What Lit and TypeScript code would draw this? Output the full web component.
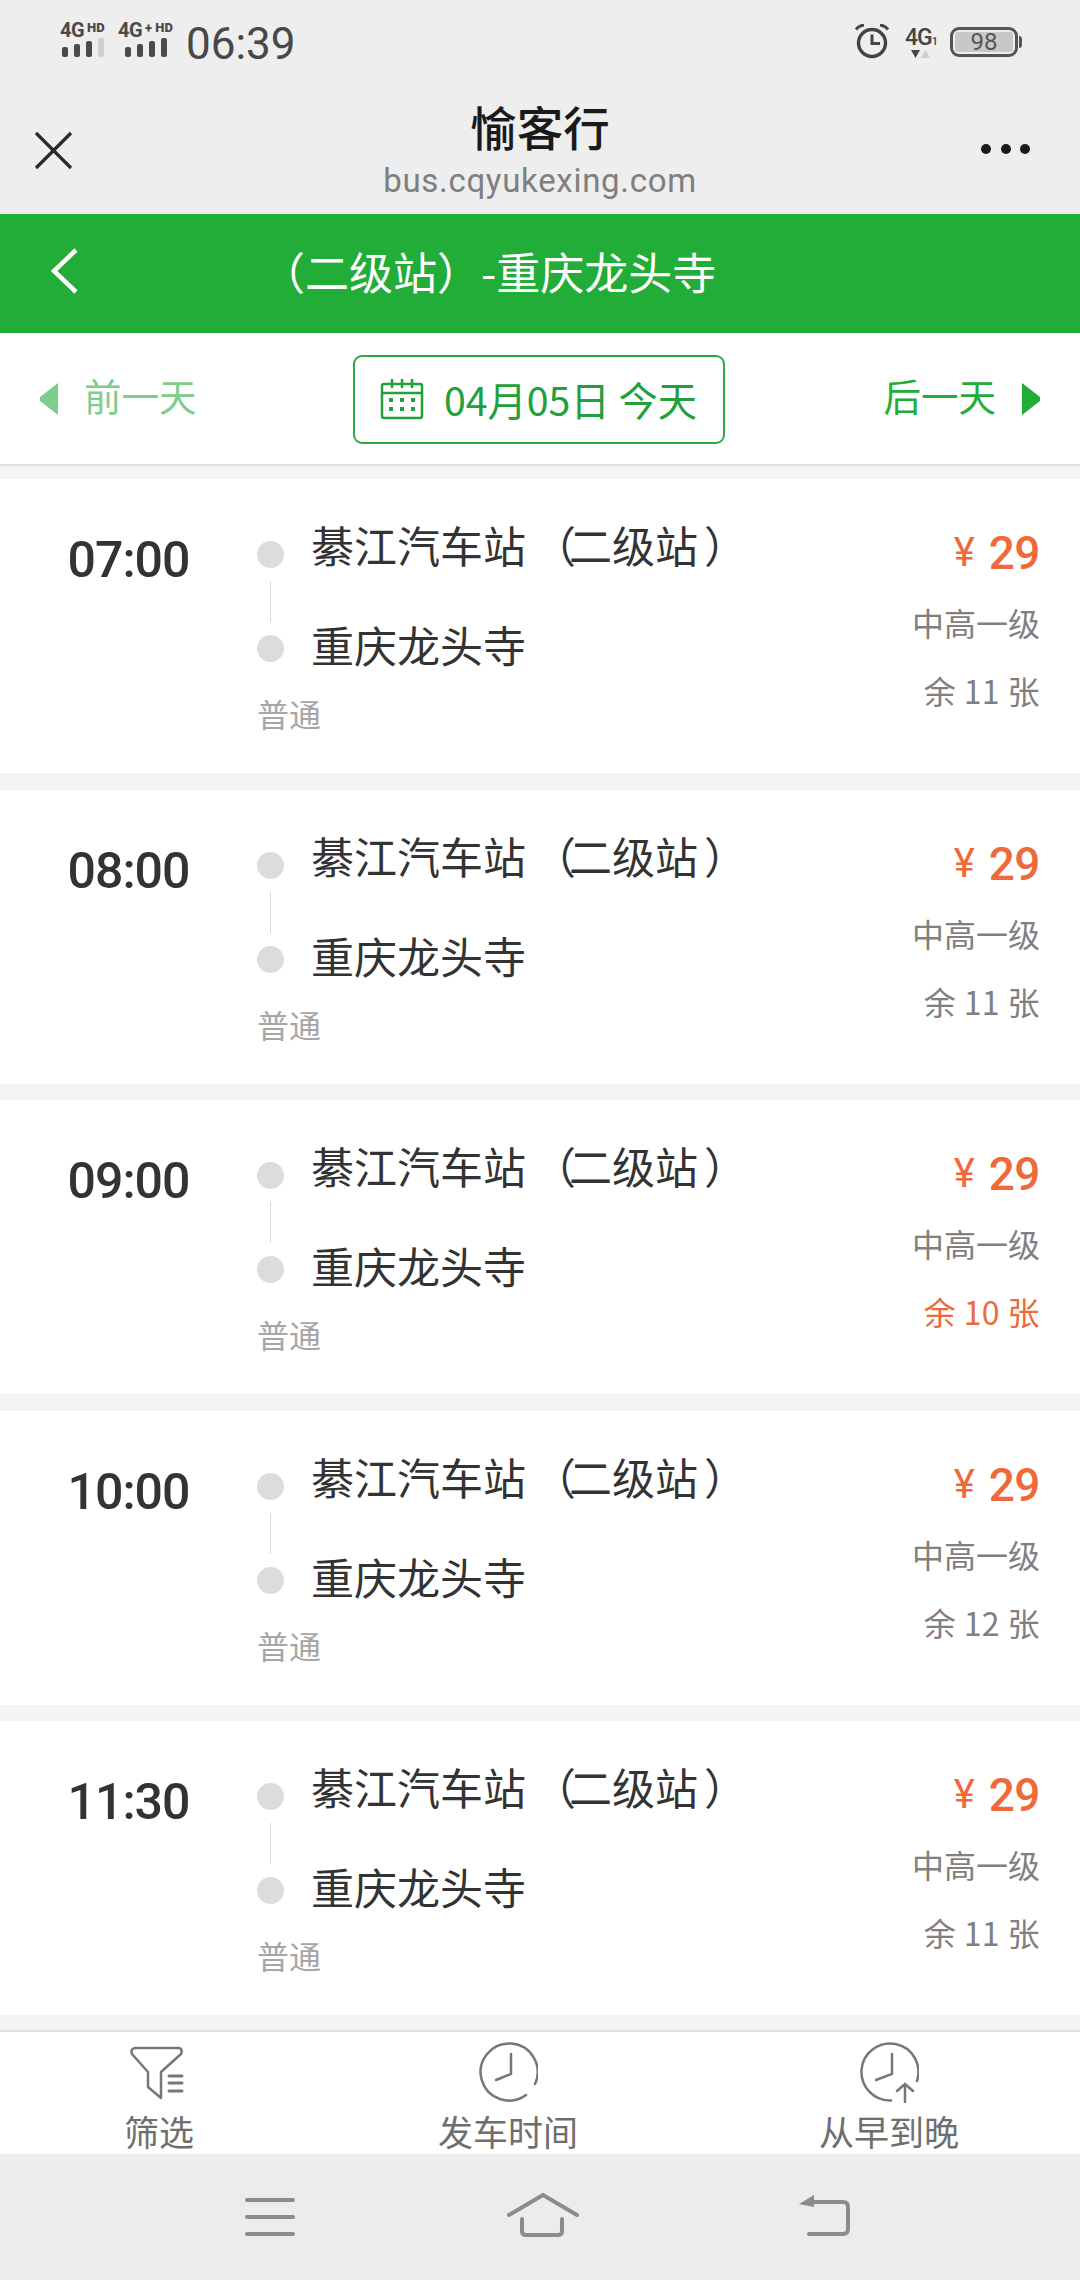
import { LitElement, html, css, svg } from "lit";
import { customElement } from "lit/decorators.js";

const trips = [
  { t: "07:00", left: "余 11 张", low: false },
  { t: "08:00", left: "余 11 张", low: false },
  { t: "09:00", left: "余 10 张", low: true },
  { t: "10:00", left: "余 12 张", low: false },
  { t: "11:30", left: "余 11 张", low: false },
];

@customElement("app-root")
export class AppRoot extends LitElement {
  static styles = css`
    :host { display: block; width: 1080px; height: 2280px; overflow: hidden; background: #f4f4f4;
      font-family: "Noto Sans CJK SC", sans-serif; }
    * { box-sizing: border-box; }
    .page { display: flex; flex-direction: column; height: 2280px; }
    .status { height: 84px; background: #eeeeee; display: flex; justify-content: space-between; padding: 0 58px 0 60px; color: #444; flex: none; }
    .st-left, .st-right { display: flex; align-items: flex-start; }
    .sig { display: flex; flex-direction: column; align-items: flex-start; padding-top: 22px; width: 58px; }
    .sig.wide { width: 68px; }
    .sig-t { font: 700 20px/16px "Roboto", sans-serif; color: #4a4a4a; display: flex; height: 16px; letter-spacing: -.5px; white-space: pre; }
    .sig-t b { font-size: 13px; line-height: 10px; margin: 1px 0 0 3px; font-weight: 900; letter-spacing: 0; }
    .sig svg { display: block; margin-top: -1px; }
    .clock-t { font: 400 44px/50px "Roboto", sans-serif; color: #484848; margin: 19px 0 0 0; }
    .st-right { padding-top: 24px; }
    .g4 { display: flex; flex-direction: column; align-items: center; width: 34px; margin: 2px 0 0 14px; }
    .g4-t { font: 500 23px/23px "Roboto", sans-serif; color: #444; letter-spacing: -1px; height: 23px; white-space: nowrap; }
    .g4-t small { font-size: 11px; }
    .batt { display: flex; align-items: center; margin: 3px 0 0 12px; }
    .batt-box { width: 68px; height: 30px; border: 3px solid #555; border-radius: 9px; padding: 2px; display: flex; }
    .batt-fill { flex: 1; background: #c8c8c8; border-radius: 3px; text-align: center; font: 400 24px/20px "Roboto", sans-serif; color: #555; }
    .batt-tip { width: 3px; height: 12px; background: #555; border-radius: 0 3px 3px 0; margin-left: 1px; }

    .title { height: 130px; background: #eeeeee; position: relative; display: flex; flex-direction: column; align-items: center; flex: none; }
    .t1 { font-size: 46.5px; line-height: 56px; color: #1a1a1a; margin-top: 14px; font-weight: 500; }
    .t2 { font: 400 33px/40px "Roboto", sans-serif; color: #7f7f7f; margin-top: 7px; letter-spacing: .7px; }
    .close { position: absolute; left: 33px; top: 46px; }
    .dots { position: absolute; left: 981px; top: 60px; display: flex; gap: 9.500px; }
    .dots i { width: 10px; height: 10px; border-radius: 50%; background: #1a1a1a; }

    .green { height: 119px; background: #22ac38; flex: none; display: flex; align-items: center; color: #fff; padding: 0 0 5px 48px; }
    .green-t { font-size: 44px; margin-left: 179px; color: #fff; white-space: pre; }

    .datebar { height: 133px; background: #fff; border-bottom: 2px solid #dfdfdf; flex: none; display: flex; align-items: center; justify-content: space-between; padding: 0 39px; }
    .day { font-size: 37.500px; line-height: 50px; display: flex; align-items: center; gap: 25px; color: #22ac38; }
    .day span { position: relative; top: -4px; }
    .day.prev { color: #7dcd8c; }
    .pick { width: 372px; height: 89px; border: 2.500px solid #2fa745; border-radius: 9px; display: flex; align-items: center; justify-content: center; gap: 20px; color: #22a03a; font-size: 39.300px; margin-left: -3px; margin-top: 1px; }
    .pick span { white-space: pre; line-height: 50px; }

    .list { flex: 1; display: flex; flex-direction: column; gap: 16.600px; padding-top: 13px; min-height: 0; }
    .card { height: 294px; background: #fff; display: grid; grid-template-columns: 257px 1fr auto; padding-right: 40px; flex: none; }
    .time { font: 500 50px/56px "Roboto", sans-serif; color: #333; letter-spacing: -1px; text-align: center; padding: 53px 0 0 0; width: 257px; }
    .mid { display: grid; grid-template-columns: 27px 1fr; column-gap: 27px; grid-template-rows: auto auto; align-content: start; }
    .rail { display: flex; flex-direction: column; align-items: center; padding-top: 62px; }
    .rail i { width: 27px; height: 27px; border-radius: 50%; background: #dcdcdc; flex: none; }
    .rail u { width: 1px; height: 41px; background: #d8d8d8; margin: 13px 0; flex: none; }
    .names { padding-top: 34px; }
    .name { font-size: 43px; line-height: 62px; color: #333; white-space: pre; }
    .name + .name { margin-top: 38px; }
    .po { margin-left: 7px; letter-spacing: -7px; }
    .pc { margin-left: 6px; letter-spacing: -6px; }
    .kind { grid-column: 1 / 3; font-size: 32px; line-height: 44px; color: #a6a6a6; margin-top: 16px; }
    .right { display: flex; flex-direction: column; align-items: flex-end; padding-top: 45px; }
    .price { display: flex; align-items: center; color: #f0693a; line-height: 58px; height: 58px; gap: 14px; }
    .price span { font: 400 40px/58px "Roboto", sans-serif; }
    .price b { font: 500 46px/58px "Roboto", sans-serif; letter-spacing: -.5px; }
    .grade, .rem { font-size: 32px; line-height: 44px; color: #808080; white-space: pre; }
    .grade { margin-top: 18px; }
    .rem { margin-top: 24px; letter-spacing: .4px; }
    .rem.low { color: #ee6a38; }

    .tabs { height: 124px; background: #fff; border-top: 2px solid #dfdfdf; flex: none; display: grid; grid-template-columns: 318px 380px 382px; }
    .tab { display: flex; flex-direction: column; align-items: center; color: #6e6e6e; font-size: 35px; line-height: 40px; }
    .tab svg { display: block; margin-top: 9px; height: 62px; flex: none; }
    .tab span { margin-top: 8px; white-space: pre; }

    .nav { height: 126px; background: #ececec; flex: none; }
    .navrow { display: flex; align-items: flex-start; padding: 44px 0 0 244px; }
    .home { margin: -5px 0 0 211px; }
    .back { margin: -3px 0 0 220px; }
  `;

  private sigBars(n: number, off: number) {
    const hs = [10, 13, 16, 19];
    return svg`${hs.map((h, i) => svg`<rect x=${off + i * 12} y=${20 - h} width="6" height=${h} rx="2" fill=${i < n ? "#4a4a4a" : "#cfcfcf"}></rect>`)}`;
  }

  render() {
    return html`<div class="page">
      <div class="status">
        <div class="st-left">
          <div class="sig">
            <div class="sig-t">4G<b>HD</b></div>
            <svg width="46" height="20" viewBox="0 0 46 20">${this.sigBars(3, 2)}</svg>
          </div>
          <div class="sig wide">
            <div class="sig-t">4G<b>+ HD</b></div>
            <svg width="52" height="20" viewBox="0 0 52 20">${this.sigBars(4, 7)}</svg>
          </div>
          <div class="clock-t">06:39</div>
        </div>
        <div class="st-right">
          <svg width="36" height="36" viewBox="0 0 36 36" fill="none" stroke="#444">
            <circle cx="18" cy="19" r="13.500" stroke-width="3.400"></circle>
            <path d="M18 10.500V19.500H26" stroke-width="3"></path>
            <path d="M2 5.500Q5 1.500 10 1M34 5.500Q31 1.500 26 1" stroke-width="3"></path>
          </svg>
          <div class="g4">
            <div class="g4-t">4G<small>1</small></div>
            <svg width="20" height="10" viewBox="0 0 20 10" style="display:block"><path d="M0 1H9L4.500 9Z" fill="#444"></path><path d="M10 9H19L14.500 1Z" fill="#cfcfcf"></path></svg>
          </div>
          <div class="batt">
            <div class="batt-box"><div class="batt-fill">98</div></div>
            <div class="batt-tip"></div>
          </div>
        </div>
      </div>

      <div class="title">
        <svg class="close" width="42" height="42" viewBox="0 0 42 42" fill="none" stroke="#2a2a2a" stroke-width="3.200"><path d="M3 3L38 38M38 3L3 38"></path></svg>
        <div class="t1">愉客行</div>
        <div class="t2">bus.cqyukexing.com</div>
        <div class="dots"><i></i><i></i><i></i></div>
      </div>

      <div class="green">
        <svg width="34" height="48" viewBox="0 0 34 48" fill="none" stroke="#fff" stroke-width="4.500"><path d="M28 3L6 24L28 45"></path></svg>
        <div class="green-t">（二级站）-重庆龙头寺</div>
      </div>

      <div class="datebar">
        <div class="day prev">
          <svg width="20" height="32" viewBox="0 0 20 32"><path d="M19 0V32L1 18V14Z" fill="#7dcd8c"></path></svg>
          <span>前一天</span>
        </div>
        <div class="pick">
          <svg width="44" height="42" viewBox="0 0 44 42" fill="none" stroke="#22a03a" stroke-width="2.500">
            <rect x="2" y="6" width="40" height="34" rx="2"></rect>
            <path d="M2 15H42M12 1V10M22 1V10M32 1V10"></path>
            <path d="M9 22H13M20 22H24M31 22H35M9 31H13M20 31H24M31 31H35" stroke-width="4"></path>
          </svg>
          <span>04月05日 今天</span>
        </div>
        <div class="day">
          <span>后一天</span>
          <svg width="20" height="32" viewBox="0 0 20 32"><path d="M1 0V32L19 18V14Z" fill="#22ac38"></path></svg>
        </div>
      </div>

      <div class="list">
        ${trips.map((r) => html`<div class="card">
          <div class="time">${r.t}</div>
          <div class="mid">
            <div class="rail"><i></i><u></u><i></i></div>
            <div class="names">
              <div class="name">綦江汽车站<span class="po">（</span>二级站<span class="pc">）</span></div>
              <div class="name">重庆龙头寺</div>
            </div>
            <div class="kind">普通</div>
          </div>
          <div class="right">
            <div class="price"><span>¥</span><b>29</b></div>
            <div class="grade">中高一级</div>
            <div class="rem ${r.low ? "low" : ""}">${r.left}</div>
          </div>
        </div>`)}
      </div>

      <div class="tabs">
        <div class="tab">
          <svg width="60" height="62" viewBox="0 0 60 62" fill="none" stroke="#777" stroke-width="2.500" stroke-linejoin="round" stroke-linecap="round">
            <path d="M6 7H50Q54 8 52 13L32 31V57L19 46V31L3 13Q1 8 6 7Z"></path>
            <path d="M40 35H53M40 42H53M40 50H53" stroke-width="3"></path>
          </svg>
          <span>筛选</span>
        </div>
        <div class="tab">
          <svg width="60" height="62" viewBox="0 0 60 62" fill="none" stroke="#777" stroke-width="2.500" stroke-linecap="round">
            <path d="M57 43A28.500 28.500 0 1 0 48 54"></path>
            <path d="M33 13V33L18 39"></path>
          </svg>
          <span>发车时间</span>
        </div>
        <div class="tab">
          <svg width="60" height="62" viewBox="0 0 60 62" fill="none" stroke="#777" stroke-width="2.500" stroke-linecap="round">
            <path d="M58 40A28.500 28.500 0 1 0 32 59.500"></path>
            <path d="M33 13V33L17 39"></path>
            <path d="M46 61V43M38 50L46 43L54 50"></path>
          </svg>
          <span>从早到晚</span>
        </div>
      </div>

      <div class="nav">
        <div class="navrow">
          <svg width="52" height="42" viewBox="0 0 52 42" stroke="#8c8c8c" stroke-width="4" stroke-linecap="round"><path d="M3 2H49M3 19H49M3 36H49"></path></svg>
          <svg class="home" width="72" height="46" viewBox="0 0 72 46" fill="none" stroke="#8c8c8c" stroke-width="4" stroke-linecap="round"><path d="M2 22L36 2L70 22"></path><path d="M15 26V38Q15 42 19 42H51Q55 42 55 38V26"></path></svg>
          <svg class="back" width="52" height="46" viewBox="0 0 52 46" fill="none" stroke="#8c8c8c" stroke-width="4" stroke-linecap="round"><path d="M14 7H44Q49 7 49 12V34Q49 39 44 39H10"></path><path d="M0 9L15 0V12Z" fill="#8c8c8c" stroke="none"></path></svg>
        </div>
      </div>
    </div>`;
  }
}
